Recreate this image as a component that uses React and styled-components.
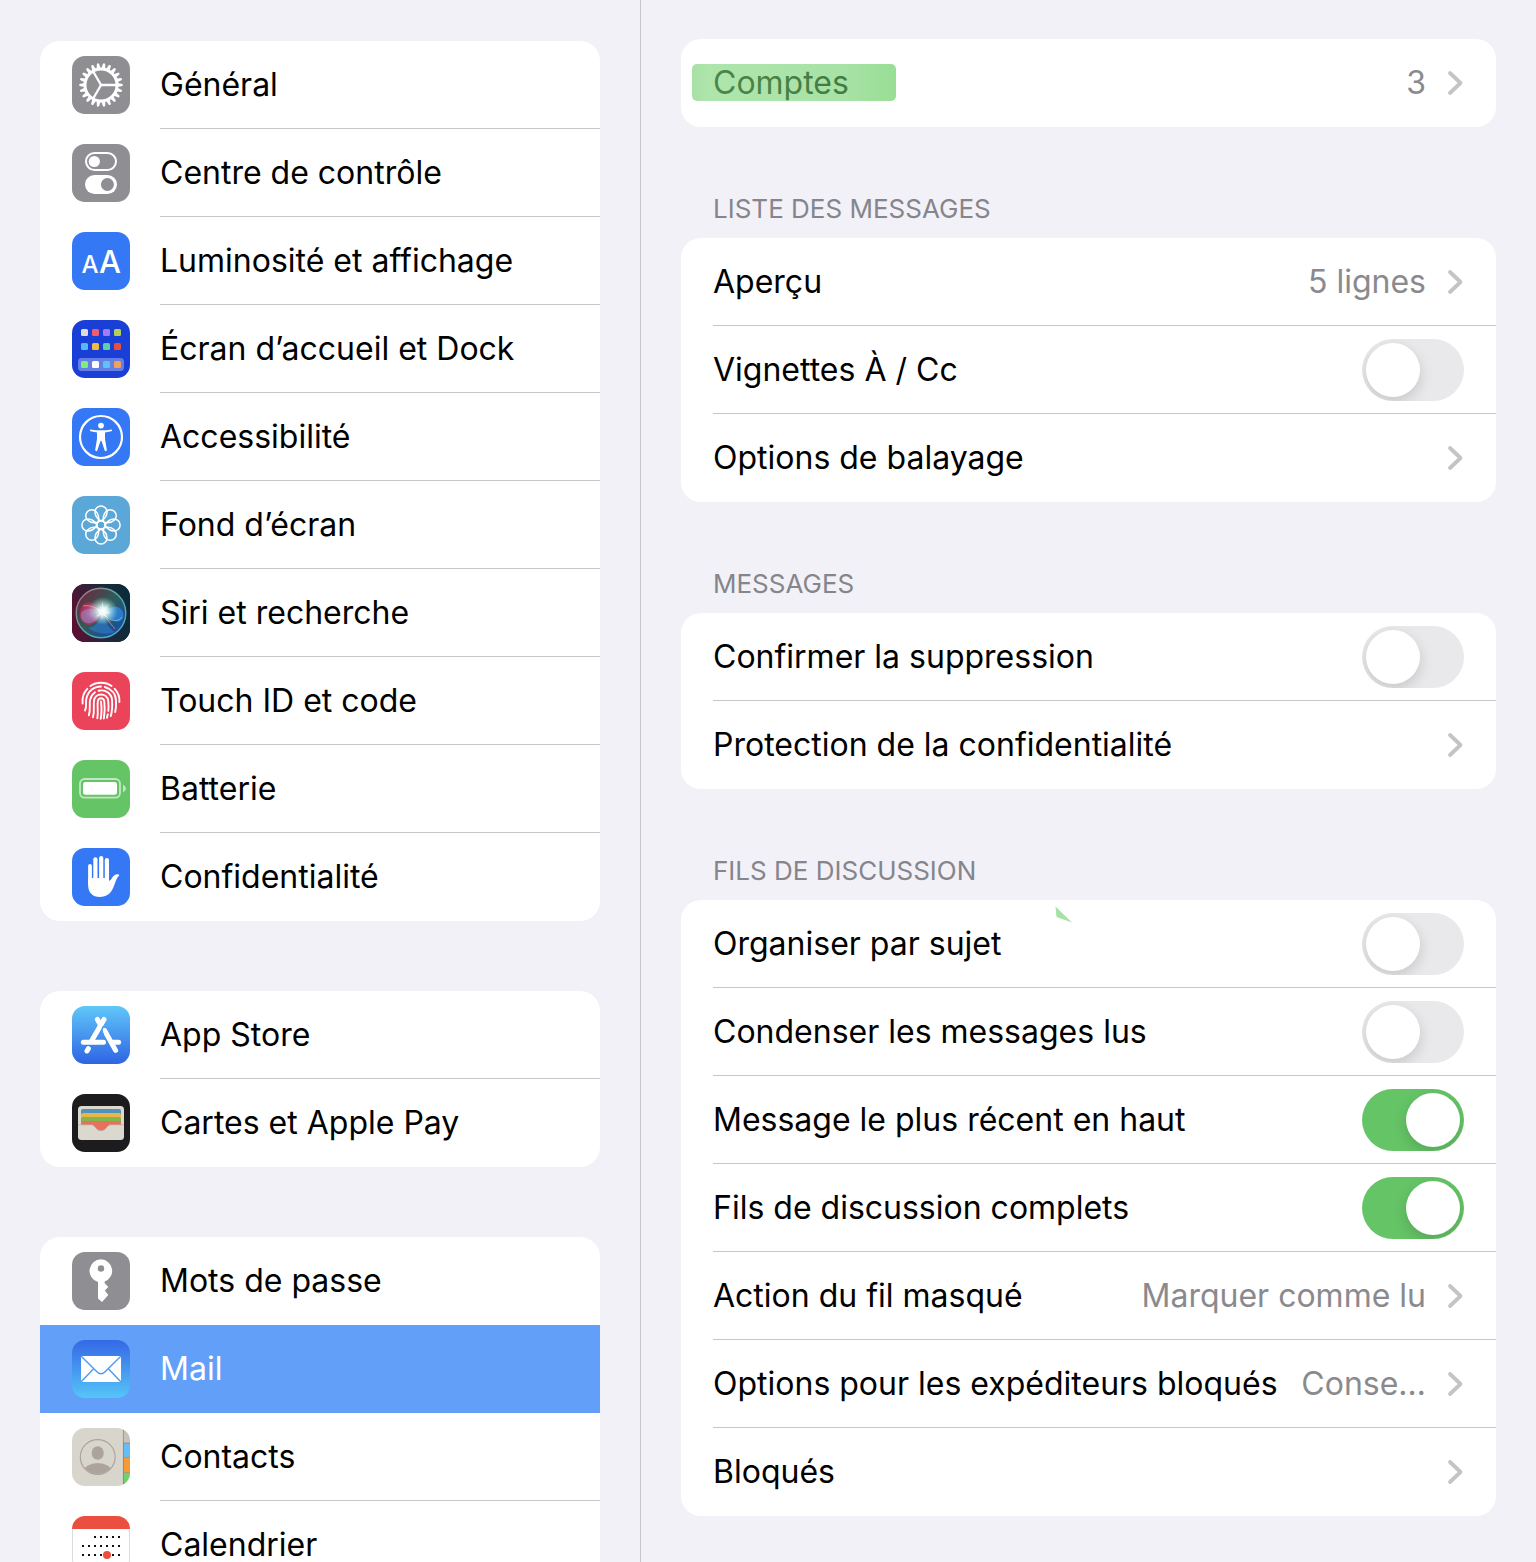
import React, { useState } from "react";
import styled, { createGlobalStyle, css } from "styled-components";

const GlobalStyle = createGlobalStyle`
  *, *::before, *::after {
    box-sizing: border-box;
  }

  body {
    margin: 0;
    background: #f2f1f8;
    color: #000;
    font-family: Inter, "Liberation Sans", sans-serif;
    font-size: 32px;
    line-height: 40px;
  }
`;

// ---------- layout ----------

const Page = styled.div`
  display: grid;
  grid-template-columns: minmax(0, 5fr) minmax(0, 7fr);
  height: 100vh;
  overflow: hidden;
`;

const Sidebar = styled.nav`
  display: flex;
  flex-direction: column;
  gap: 70px;
  padding: 41px 40px 0;
  overflow: hidden;
`;

const Content = styled.main`
  padding: 39px 40px;
  border-left: 1px solid #c6c6c9;
  overflow: hidden;
`;

const Card = styled.div`
  flex: none;
  border-radius: 20px;
  background: #fff;
  overflow: hidden;
`;

const SectionTitle = styled.h2`
  margin: 0;
  padding: 66px 32px 13px;
  color: #85858b;
  font-size: 26px;
  font-weight: 400;
  line-height: 32px;
`;

// ---------- sidebar rows ----------

const MenuLabel = styled.span`
  flex: 1;
  display: flex;
  align-items: center;
  height: 88px;
  border-bottom: 1px solid ${({ $line }) => ($line ? "#c6c6c8" : "transparent")};
`;

const MenuLink = styled.a`
  display: flex;
  align-items: center;
  gap: 30px;
  height: 88px;
  padding-left: 32px;
  color: inherit;
  text-decoration: none;

  ${({ $active }) =>
    $active &&
    css`
      background: #629ff8;
      color: #fff;
    `}
`;

const Icon = styled.svg`
  flex: none;
  width: 58px;
  height: 58px;
  border-radius: 13px;
  background: ${({ $bg }) => $bg};
`;

// ---------- settings rows ----------

const rowStyles = css`
  display: flex;
  align-items: center;
  height: 88px;
  margin-left: 32px;
  padding-right: 32px;
  border-bottom: 1px solid #c6c6c8;
  color: inherit;
  text-decoration: none;
  white-space: nowrap;

  &:last-child {
    border-bottom-color: transparent;
  }
`;

const LinkRow = styled.a`
  ${rowStyles}
`;

const SwitchRow = styled.label`
  ${rowStyles}
`;

const RowLabel = styled.span`
  position: relative;
  flex: 1;
`;

const RowValue = styled.span`
  margin-left: 22px;
  color: #8a8a8e;
`;

const Chevron = styled.svg`
  flex: none;
  width: 18px;
  height: 28px;
  margin-left: 20px;
`;

const Switch = styled.input`
  appearance: none;
  flex: none;
  width: 102px;
  height: 62px;
  margin: 0;
  padding: 4px;
  border-radius: 31px;
  background: #e9e9eb;
  overflow: hidden;

  &::before {
    content: "";
    display: block;
    width: 54px;
    height: 54px;
    border-radius: 50%;
    background: #fff;
    box-shadow: 0 5px 14px rgba(0, 0, 0, 0.15);
  }

  &:checked {
    background: #65c466;
  }

  &:checked::before {
    margin-left: auto;
  }
`;

// Green marker stroke over the label
const Marker = styled.span`
  position: absolute;
  top: 1px;
  left: -21px;
  width: 204px;
  height: 37px;
  border-radius: 5px;
  background: linear-gradient(
    90deg,
    rgba(110, 203, 106, 0.6),
    rgba(125, 213, 120, 0.62) 8%,
    rgba(110, 206, 106, 0.6) 75%,
    rgba(98, 205, 94, 0.66)
  );
`;

const MarkerChip = styled.svg`
  position: absolute;
  top: -18px;
  left: 342px;
  width: 18px;
  height: 17px;
`;

// ---------- icons ----------

const range = (n) => Array.from({ length: n }, (_, i) => i);

const GearIcon = () => (
  <Icon viewBox="0 0 58 58" $bg="#8e8e93" aria-hidden="true">
    <g stroke="#fff" fill="none">
      <circle cx="29" cy="29" r="16" strokeWidth="3" />
      {range(22).map((i) => (
        <path
          key={i}
          d="M27 12.4L27.9 7.6Q29 6.6 30.1 7.6L31 12.4Z"
          fill="#fff"
          stroke="none"
          transform={`rotate(${90 + (i * 360) / 22} 29 29)`}
        />
      ))}
      {[0, 120, 240].map((a) => (
        <path key={a} d="M29 29H44" strokeWidth="2.3" transform={`rotate(${a} 29 29)`} />
      ))}
    </g>
  </Icon>
);

const ControlIcon = () => (
  <Icon viewBox="0 0 58 58" $bg="#8e8e93" aria-hidden="true">
    <rect x="14" y="9" width="30" height="17" rx="8.5" fill="none" stroke="#fff" strokeWidth="2" />
    <circle cx="22.3" cy="17.5" r="5.6" fill="#fff" />
    <rect x="13" y="31" width="32" height="19" rx="9.5" fill="#fff" />
    <circle cx="35.4" cy="40.5" r="6.5" fill="#8e8e93" />
  </Icon>
);

const DisplayIcon = () => (
  <Icon viewBox="0 0 58 58" $bg="#3478f6" aria-hidden="true">
    <g fill="#fff" fontFamily="Inter" fontWeight="500" textAnchor="middle">
      <text x="18" y="41" fontSize="24">A</text>
      <text x="38" y="41" fontSize="31">A</text>
    </g>
  </Icon>
);

const homeColors = [
  ["#dcdcdc", "#ec5f73", "#a47bf5", "#b5cf5b"],
  ["#56b9f5", "#f3b945", "#5fcfa6", "#e5503f"],
  ["#82ea7f", "#ffffff", "#5cc3f7", "#f0a15c"],
];

const HomeIcon = () => (
  <Icon viewBox="0 0 58 58" $bg="#1a3fd6" aria-hidden="true">
    <rect x="6" y="38" width="46" height="13" rx="3.5" fill="#fff" opacity=".33" />
    {homeColors.map((row, r) =>
      row.map((color, c) => (
        <rect
          key={color}
          x={9 + c * 11}
          y={[9, 23, 41][r]}
          width="7"
          height="7"
          rx="1.5"
          fill={color}
        />
      ))
    )}
  </Icon>
);

const AccessIcon = () => (
  <Icon viewBox="0 0 58 58" $bg="#3478f6" aria-hidden="true">
    <circle cx="29" cy="29" r="21" fill="none" stroke="#fff" strokeWidth="2.2" />
    <circle cx="29" cy="17.6" r="2.9" fill="#fff" />
    <path
      d="M19 21.4C25 22.6 33 22.6 39 21.4C40.2 21.3 40.4 23 39.3 23.3L33 24.6V31L34.8 41.8C34.9 43.3 33.2 43.7 32.7 42.4L29.4 32.8H28.6L25.3 42.4C24.8 43.7 23.1 43.3 23.2 41.8L25 31V24.6L18.7 23.3C17.6 23 17.8 21.3 19 21.4Z"
      fill="#fff"
    />
  </Icon>
);

const WallpaperIcon = () => (
  <Icon viewBox="0 0 58 58" $bg="#5aa7d8" aria-hidden="true">
    <g fill="none" stroke="#fff" strokeWidth="1.5" strokeLinejoin="round">
      <circle cx="29" cy="29" r="4" />
      {range(8).map((i) => (
        <path
          key={i}
          d="M29 25C25.4 22.8 23 19.4 23 15.9A6 6 0 1 1 35 15.9C35 19.4 32.6 22.8 29 25"
          transform={`rotate(${i * 45} 29 29)`}
        />
      ))}
    </g>
  </Icon>
);

const SiriIcon = () => (
  <Icon viewBox="0 0 58 58" $bg="#16233a" aria-hidden="true">
    <defs>
      <linearGradient id="siriBase" x1="0" y1=".6" x2="1" y2=".4">
        <stop offset="0" stopColor="#5c0f33" />
        <stop offset=".5" stopColor="#20283a" />
        <stop offset="1" stopColor="#0a2c3a" />
      </linearGradient>
      <linearGradient id="siriRing" x1="0" y1="0" x2="1" y2="1">
        <stop offset="0" stopColor="#c0607c" />
        <stop offset=".45" stopColor="#55b0a0" />
        <stop offset="1" stopColor="#4fa4dc" />
      </linearGradient>
      <linearGradient id="siriOrb" x1=".1" y1=".1" x2=".9" y2=".9">
        <stop offset="0" stopColor="#6b2a3c" />
        <stop offset=".45" stopColor="#2f5a58" />
        <stop offset="1" stopColor="#1550a0" />
      </linearGradient>
      <radialGradient id="siriPink">
        <stop offset="0" stopColor="#f0609a" />
        <stop offset="1" stopColor="#c02450" stopOpacity=".65" />
      </radialGradient>
      <radialGradient id="siriGlow">
        <stop offset="0" stopColor="#fff" />
        <stop offset=".3" stopColor="#e8fffb" stopOpacity=".9" />
        <stop offset="1" stopColor="#9fe6dc" stopOpacity="0" />
      </radialGradient>
    </defs>
    <rect width="58" height="58" fill="url(#siriBase)" />
    <circle cx="29" cy="29" r="24.8" fill="url(#siriOrb)" stroke="url(#siriRing)" strokeWidth="1.4" />
    <path d="M30 29C25 19 18 16 12 20C4 27 8 41 17 41C24 41 27 34 30 29Z" fill="url(#siriPink)" />
    <path d="M30 29C21 22 12 25 9 29C7 36 14 42 21 38C26 35 28 32 30 29Z" fill="#8e88c4" opacity=".6" />
    <path d="M30 29C38 22 47 20 51 28C53 36 47 40 41 36C36 34 33 31 30 29Z" fill="#2e82d8" opacity=".85" />
    <path d="M30 29C34 38 36 44 43 48C35 51 24 50 16 44C24 43 28 36 30 29Z" fill="#2e7cd2" opacity=".6" />
    <path d="M11 22C20 20 27 26 32 31C38 37 46 39 50 33" fill="none" stroke="#a7dbe8" strokeWidth=".8" opacity=".7" />
    <path d="M31 30L43 45" stroke="#f08aa4" strokeWidth="1" opacity=".7" />
    <ellipse cx="31" cy="27" rx="15" ry="14" fill="url(#siriGlow)" />
    <path
      d="M30.5 16L31.4 25L37 20L33 27L39 28.8L33 30L36 34L31.2 31L30 36L29 31L23 33L28 28.4L24 24L29.4 26Z"
      fill="#fff"
      opacity=".5"
    />
  </Icon>
);

const TouchIcon = () => (
  <Icon viewBox="0 0 58 58" $bg="#eb445a" aria-hidden="true">
    <g fill="none" stroke="#fff" strokeWidth="1.9" strokeLinecap="round">
      <path d="M18.4 14C24.5 9.6 33.5 9.6 39.6 14" />
      <path d="M15.3 16.8C11.6 20.6 10 26 10.6 31.5" />
      <path d="M42.7 16.8C46 20.3 47.8 25 47.4 30" />
      <path d="M13 38.5C15 35 13.6 32 14.2 27.5C15.6 19 22 14.5 29 14.5" />
      <path d="M32.8 15C40 17 44 22.5 44 29C44.2 33 44 37 43.2 40" />
      <path d="M16.8 43.3C18.8 38 17.2 33 18 28C18.8 24.5 20.5 22 23 20.2" />
      <path d="M26.6 18.7C34 17 39.8 22 40.1 28.5C40.4 34 40.2 39 38.8 44" />
      <path d="M21 45.3C22.8 39 21.2 34 22 28.6C23.2 20.4 34.8 20.4 36.2 28.6C36.6 32 36.6 35.5 36.3 38.8" />
      <path d="M35.8 42.2L35 45.8" />
      <path d="M25.3 46.3C26.6 40 25 34 25.8 29.2C26.6 25.3 31.4 25.3 32.3 29.2C33 35 32.8 41 31.8 46.5" />
      <path d="M29 29.5C29.6 35 30 41 28.7 46.8" />
    </g>
  </Icon>
);

const BatteryIcon = () => (
  <Icon viewBox="0 0 58 58" $bg="#65c466" aria-hidden="true">
    <rect x="8" y="19" width="40" height="18.6" rx="4.5" fill="none" stroke="#fff" strokeWidth="1.8" opacity=".6" />
    <rect x="11" y="22" width="34" height="12.8" rx="2.4" fill="#fff" />
    <path d="M51 24.7C54.8 26.5 54.8 30.5 51 32.2Z" fill="#fff" opacity=".6" />
  </Icon>
);

const HandIcon = () => (
  <Icon viewBox="0 0 58 58" $bg="#3478f6" aria-hidden="true">
    <g stroke="#fff" strokeLinecap="round" strokeWidth="4.2">
      <path d="M18 18V36" strokeWidth="3.8" />
      <path d="M23.4 11.3V34" />
      <path d="M29.2 10V34" />
      <path d="M34.9 12.2V34" />
    </g>
    <path
      d="M16.1 30H37V32.6C39 33 40 29 42 27.4C43.8 26 46.4 25.9 47.3 26.7C47.4 27.8 45.6 28.8 44.6 31C42.8 35 42 39.2 39.6 42.8C37 46.8 33.2 49 27.8 49C20.6 49 16.1 44.6 16.1 37Z"
      fill="#fff"
    />
  </Icon>
);

const StoreIcon = () => (
  <Icon viewBox="0 0 58 58" $bg="linear-gradient(#60c7f8, #2f64e4)" aria-hidden="true">
    <g stroke="#fff" strokeWidth="5" strokeLinecap="round">
      <path d="M25.4 13.4L28 18" />
      <path d="M32 13.4L19.8 34.6" />
      <path d="M11.4 36.3H31.5" />
      <path d="M32.6 24.5L43.6 44.4" />
      <path d="M41 36.3H46.6" />
      <path d="M16.4 42.6L15 45" />
    </g>
    <path d="M30.6 20.5C29.8 23.5 30.3 26 31.8 29" stroke="#4792ee" strokeWidth="1" fill="none" />
  </Icon>
);

const WalletIcon = () => (
  <Icon viewBox="0 0 58 58" $bg="#1c1c1e" aria-hidden="true">
    <rect x="6" y="12" width="46" height="34" rx="3.5" fill="#dad8cf" />
    <rect x="9" y="15" width="40" height="10" rx="2" fill="#4f93bb" />
    <rect x="9" y="19" width="40" height="8" rx="2" fill="#ecb446" />
    <rect x="9" y="23" width="40" height="7" rx="2" fill="#7fb74a" />
    <path
      d="M9 29C9 27.6 9.8 27 11 27H47C48.2 27 49 27.6 49 29V31H38.5C35 31 34.2 36.8 29 36.8S23 31 19.5 31H9Z"
      fill="#e8705f"
    />
    <path d="M6 30.8H20C23.2 31.4 24 36.8 29 36.8S34.8 31.4 38 30.8H52" fill="none" stroke="#b9b3a8" strokeWidth=".7" />
  </Icon>
);

const KeyIcon = () => (
  <Icon viewBox="0 0 58 58" $bg="#8e8e93" aria-hidden="true">
    <path
      fillRule="evenodd"
      d="M29 7.3A11.5 11.5 0 0 1 32.6 29.6V31L36.3 35L32.8 38.6L36.3 43L30 50L26 46.5V29.9A11.5 11.5 0 0 1 29 7.3ZM29 13.3A3.2 3.2 0 1 0 29 19.7A3.2 3.2 0 1 0 29 13.3Z"
      fill="#fff"
    />
  </Icon>
);

const MailIcon = () => (
  <Icon viewBox="0 0 58 58" $bg="linear-gradient(#3568e6, #55c5f8)" aria-hidden="true">
    <rect x="9" y="16" width="40" height="26" rx="1.2" fill="#fff" />
    <g fill="none" stroke="#4b9cf0" strokeWidth="1.4">
      <path d="M9.2 16.2L24.4 31.2C27.4 34.6 30.6 34.6 33.6 31.2L48.8 16.2" />
      <path d="M21.4 29L9.2 41.8M36.6 29L48.8 41.8" />
    </g>
  </Icon>
);

const ContactsIcon = () => (
  <Icon viewBox="0 0 58 58" $bg="#d8d5cc" aria-hidden="true">
    <defs>
      <clipPath id="contactClip">
        <circle cx="25.7" cy="29" r="17" />
      </clipPath>
    </defs>
    <circle cx="25.7" cy="29" r="17.4" fill="none" stroke="#aca49c" strokeWidth="1.2" />
    <g fill="#aca49c">
      <ellipse cx="25.7" cy="25" rx="6.1" ry="6.8" />
      <ellipse cx="25.7" cy="44" rx="14.5" ry="9" clipPath="url(#contactClip)" />
    </g>
    <rect x="51" width="7" height="15" fill="#c9c4b9" />
    <rect x="51" y="15" width="7" height="14" fill="#66bdf6" />
    <rect x="51" y="29.5" width="7" height="15" fill="#f49b36" />
    <rect x="51" y="45" width="7" height="13" fill="#70d26f" />
    <path d="M51 15H58M51 29.4H58M51 44.6H58M51.4 2V56" stroke="#6f6a5e" strokeWidth=".8" opacity=".6" />
  </Icon>
);

const CalendarIcon = () => (
  <Icon viewBox="0 0 58 58" $bg="#fff" aria-hidden="true">
    <rect x=".5" y=".5" width="57" height="57" rx="13" fill="#fff" stroke="#dcdcdc" />
    <rect width="58" height="13" fill="#ea4f3f" />
    {[21, 30, 39, 48].map((y) =>
      range(7).map((i) =>
        y === 21 && i < 2 ? null : (
          <rect key={`${y}-${i}`} x={10 + i * 6} y={y - 1} width="2" height="2" fill="#111" />
        )
      )
    )}
    <circle cx="35" cy="39" r="4" fill="#ea4f3f" />
  </Icon>
);

// ---------- data ----------

const menu = [
  [
    { label: "Général", icon: GearIcon },
    { label: "Centre de contrôle", icon: ControlIcon },
    { label: "Luminosité et affichage", icon: DisplayIcon },
    { label: "Écran d’accueil et Dock", icon: HomeIcon },
    { label: "Accessibilité", icon: AccessIcon },
    { label: "Fond d’écran", icon: WallpaperIcon },
    { label: "Siri et recherche", icon: SiriIcon },
    { label: "Touch ID et code", icon: TouchIcon },
    { label: "Batterie", icon: BatteryIcon },
    { label: "Confidentialité", icon: HandIcon },
  ],
  [
    { label: "App Store", icon: StoreIcon },
    { label: "Cartes et Apple Pay", icon: WalletIcon },
  ],
  [
    { label: "Mots de passe", icon: KeyIcon },
    { label: "Mail", icon: MailIcon, active: true },
    { label: "Contacts", icon: ContactsIcon },
    { label: "Calendrier", icon: CalendarIcon },
  ],
];

const sections = [
  { rows: [{ label: "Comptes", value: "3", marked: true }] },
  {
    title: "LISTE DES MESSAGES",
    rows: [
      { label: "Aperçu", value: "5 lignes" },
      { label: "Vignettes À / Cc", on: false },
      { label: "Options de balayage" },
    ],
  },
  {
    title: "MESSAGES",
    rows: [
      { label: "Confirmer la suppression", on: false },
      { label: "Protection de la confidentialité" },
    ],
  },
  {
    title: "FILS DE DISCUSSION",
    rows: [
      { label: "Organiser par sujet", on: false, chip: true },
      { label: "Condenser les messages lus", on: false },
      { label: "Message le plus récent en haut", on: true },
      { label: "Fils de discussion complets", on: true },
      { label: "Action du fil masqué", value: "Marquer comme lu" },
      { label: "Options pour les expéditeurs bloqués", value: "Conse…" },
      { label: "Bloqués" },
    ],
  },
];

// ---------- components ----------

const MenuCard = ({ items }) => (
  <Card>
    {items.map(({ label, icon: ItemIcon, active }, i) => {
      const next = items[i + 1];
      return (
        <MenuLink key={label} href="#" $active={active} aria-current={active ? "page" : undefined}>
          <ItemIcon />
          <MenuLabel $line={!active && next && !next.active}>{label}</MenuLabel>
        </MenuLink>
      );
    })}
  </Card>
);

const ToggleSetting = ({ label, on, chip }) => {
  const [checked, setChecked] = useState(on);

  return (
    <SwitchRow>
      <RowLabel>
        {label}
        {chip && (
          <MarkerChip viewBox="0 0 18 17" aria-hidden="true">
            <path d="M0.5 0.5L17 16.5L1.5 11Z" fill="#a6e3a3" />
          </MarkerChip>
        )}
      </RowLabel>
      <Switch
        type="checkbox"
        role="switch"
        checked={checked}
        onChange={(e) => setChecked(e.target.checked)}
      />
    </SwitchRow>
  );
};

const LinkSetting = ({ label, value, marked }) => (
  <LinkRow href="#">
    <RowLabel>
      {label}
      {marked && <Marker />}
    </RowLabel>
    {value && <RowValue>{value}</RowValue>}
    <Chevron viewBox="0 0 18 28" aria-hidden="true">
      <path
        d="M4 4L14.5 14L4 24"
        fill="none"
        stroke="#c4c4c6"
        strokeWidth="3.8"
        strokeLinecap="round"
        strokeLinejoin="round"
      />
    </Chevron>
  </LinkRow>
);

const App = () => {
  return (
    <>
      <GlobalStyle />
      <Page>
        <Sidebar>
          {menu.map((items) => (
            <MenuCard key={items[0].label} items={items} />
          ))}
        </Sidebar>
        <Content>
          {sections.map(({ title, rows }) => (
            <section key={rows[0].label}>
              {title && <SectionTitle>{title}</SectionTitle>}
              <Card>
                {rows.map((row) =>
                  row.on === undefined ? (
                    <LinkSetting key={row.label} {...row} />
                  ) : (
                    <ToggleSetting key={row.label} {...row} />
                  )
                )}
              </Card>
            </section>
          ))}
        </Content>
      </Page>
    </>
  );
};

export default App;
